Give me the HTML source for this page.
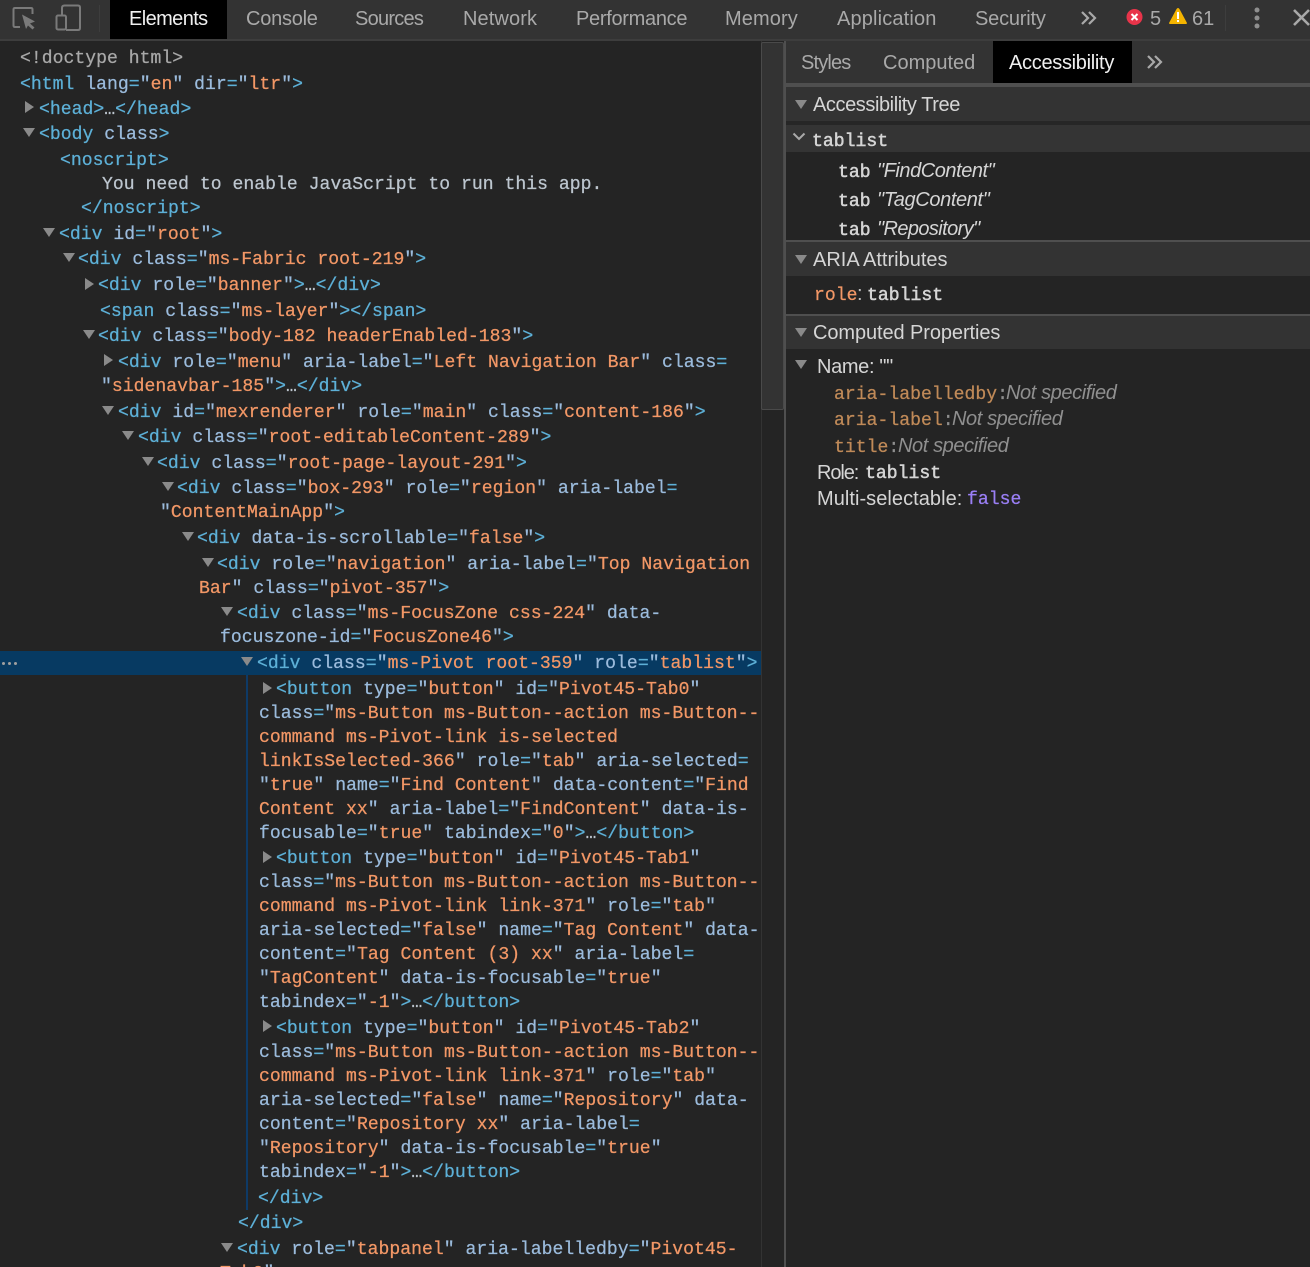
<!DOCTYPE html>
<html lang="en"><head><meta charset="utf-8"><title>DevTools</title>
<style>
html,body{margin:0;padding:0;background:#242424}
#r{position:relative;width:1310px;height:1267px;overflow:hidden;background:#242424;font-family:"Liberation Sans",sans-serif}
#r div{position:absolute}
.l{font:18.1px/24px "Liberation Mono",monospace;color:#bdc6cf;white-space:pre;height:24px;margin-top:2px;letter-spacing:.02px;-webkit-text-stroke:.25px}
.l b,.l i,.l u,.l s{font-weight:normal;font-style:normal;text-decoration:none}
.l b{color:#5db0d7}.l i{color:#9bbbdc}.l u{color:#f29766}.l s{color:#5db0d7}
.tr{width:0;height:0;border-style:solid;border-color:transparent}
.ar{border-width:6px 0 6px 9px;border-left-color:#8a8a8a;margin-top:0;margin-left:1px}
.ad{border-width:9px 6px 0 6px;border-top-color:#8a8a8a;margin-top:0}
.u{font-size:20px;line-height:26px;white-space:pre;color:#a9a9a9}
.h{left:786px;width:524px;background:#333}
.p{color:#d5d5d5}
.m{font:18.1px/24px "Liberation Mono",monospace;color:#d5d5d5;-webkit-text-stroke:.5px}
.n{font-style:italic}
</style></head><body><div id="r">

<div style="left:0;top:0;width:1310px;height:39px;background:#333"></div>
<div style="left:0;top:39px;width:1310px;height:2px;background:#3d3d3d"></div>
<div style="left:110px;top:0;width:117px;height:39px;background:#000"></div>
<div style="left:99px;top:5px;width:1px;height:27px;background:#3d3d3d"></div>

<svg style="position:absolute;left:0;top:0" width="100" height="36" viewBox="0 0 100 36" fill="none" stroke="#7a7a7a" stroke-width="2">
<path d="M20 27H15q-1.500 0-1.500-1.500V9.500Q13.500 8 15 8H31q1.500 0 1.500 1.500V14"/>
<path d="M22 14.500L35 21.500L30 23.500L34.500 27.500L32.500 29.500L28 25.500L26 29Z" fill="#7a7a7a" stroke="none"/>
<path d="M62 14.500V8q0-2.500 2.500-2.500H78q2 0 2 2V28q0 2-2 2H66"/>
<rect x="56.500" y="15.500" width="9.500" height="14" rx="1.500"/>
</svg>

<div class="u" style="left:129px;top:6px;color:#f0f0f0;letter-spacing:-.6px">Elements</div>
<div class="u" style="left:246px;top:6px;letter-spacing:-.25px">Console</div>
<div class="u" style="left:355px;top:6px;letter-spacing:-.75px">Sources</div>
<div class="u" style="left:463px;top:6px;letter-spacing:.1px">Network</div>
<div class="u" style="left:576px;top:6px;letter-spacing:-.3px">Performance</div>
<div class="u" style="left:725px;top:6px;letter-spacing:.1px">Memory</div>
<div class="u" style="left:837px;top:6px;letter-spacing:.15px">Application</div>
<div class="u" style="left:975px;top:6px;letter-spacing:-.2px">Security</div>

<svg style="position:absolute;left:1078px;top:9px" width="22" height="18" viewBox="0 0 22 18" fill="none" stroke="#a9a9a9" stroke-width="2.200"><path d="M4 3l6 6-6 6M11 3l6 6-6 6"/></svg>
<svg style="position:absolute;left:1126px;top:9px" width="17" height="17" viewBox="0 0 17 17"><circle cx="8.500" cy="8" r="8" fill="#e8344a"/><path d="M5.500 5l6 6M11.500 5l-6 6" stroke="#fff" stroke-width="2"/></svg>
<div class="u" style="left:1150px;top:6px">5</div>
<svg style="position:absolute;left:1169px;top:8px" width="18" height="17" viewBox="0 0 18 17"><path d="M9 0q1 0 2 2l7 13q0 1-1 1H1q-1 0-1-1L7 2q1-2 2-2z" fill="#f4b400"/><rect x="8" y="4" width="2" height="7" fill="#fff"/><rect x="8" y="12" width="2" height="2" fill="#fff"/></svg>
<div class="u" style="left:1192px;top:6px">61</div>
<div style="left:1225px;top:5px;width:1px;height:26px;background:#3d3d3d"></div>
<svg style="position:absolute;left:1250px;top:7px" width="14" height="22" viewBox="0 0 14 22" fill="#8f8f8f"><circle cx="7" cy="3" r="2.500"/><circle cx="7" cy="11" r="2.500"/><circle cx="7" cy="19" r="2.500"/></svg>
<svg style="position:absolute;left:1292px;top:8px" width="18" height="18" viewBox="0 0 18 18" fill="none" stroke="#a9a9a9" stroke-width="2.600"><path d="M2 2l15 15M17 2L2 17"/></svg>

<!-- scrollbar -->
<div style="left:761px;top:41px;width:23px;height:1226px;border-left:1px solid #333;box-sizing:border-box;background:#242424"></div>
<div style="left:761px;top:42px;width:23px;height:368px;background:#333;border:1px solid #4a4a4a;box-sizing:border-box;border-radius:2px"></div>
<div style="left:784px;top:41px;width:2px;height:1226px;background:#4f4f4f"></div>

<!-- selected row -->
<div style="left:0;top:651px;width:761px;height:24px;background:#073a62"></div>
<div style="left:2px;top:662px;width:3px;height:3px;border-radius:50%;background:#a0a0a0"></div>
<div style="left:8px;top:662px;width:3px;height:3px;border-radius:50%;background:#a0a0a0"></div>
<div style="left:14px;top:662px;width:3px;height:3px;border-radius:50%;background:#a0a0a0"></div>
<div style="left:246px;top:675px;width:2px;height:535px;background:#0e3a66"></div>

<!-- arrows -->
<div class="tr ar" style="left:24px;top:101px"></div>
<div class="tr ad" style="left:23px;top:128px"></div>
<div class="tr ad" style="left:43px;top:228px"></div>
<div class="tr ad" style="left:63px;top:253px"></div>
<div class="tr ar" style="left:84px;top:278px"></div>
<div class="tr ad" style="left:83px;top:330px"></div>
<div class="tr ar" style="left:103px;top:354px"></div>
<div class="tr ad" style="left:102px;top:406px"></div>
<div class="tr ad" style="left:122px;top:431px"></div>
<div class="tr ad" style="left:142px;top:457px"></div>
<div class="tr ad" style="left:162px;top:482px"></div>
<div class="tr ad" style="left:182px;top:532px"></div>
<div class="tr ad" style="left:202px;top:558px"></div>
<div class="tr ad" style="left:221px;top:607px"></div>
<div class="tr ad" style="left:241px;top:657px"></div>
<div class="tr ar" style="left:262px;top:682px"></div>
<div class="tr ar" style="left:262px;top:851px"></div>
<div class="tr ar" style="left:262px;top:1020px"></div>
<div class="tr ad" style="left:221px;top:1243px"></div>

<!-- DOM tree -->
<div class="l" style="left:20px;top:45px;color:#a8a8a8">&lt;!doctype html&gt;</div>
<div class="l" style="left:20px;top:71px"><b>&lt;html</b> <i>lang</i><s>=</s><i>"</i><u>en</u><i>"</i> <i>dir</i><s>=</s><i>"</i><u>ltr</u><i>"</i><b>&gt;</b></div>
<div class="l" style="left:39px;top:96px"><b>&lt;head&gt;</b>…<b>&lt;/head&gt;</b></div>
<div class="l" style="left:39px;top:121px"><b>&lt;body</b> <i>class</i><b>&gt;</b></div>
<div class="l" style="left:60px;top:147px"><b>&lt;noscript&gt;</b></div>
<div class="l" style="left:102px;top:171px">You need to enable JavaScript to run this app.</div>
<div class="l" style="left:81px;top:195px"><b>&lt;/noscript&gt;</b></div>
<div class="l" style="left:59px;top:221px"><b>&lt;div</b> <i>id</i><s>=</s><i>"</i><u>root</u><i>"</i><b>&gt;</b></div>
<div class="l" style="left:78px;top:246px"><b>&lt;div</b> <i>class</i><s>=</s><i>"</i><u>ms-Fabric root-219</u><i>"</i><b>&gt;</b></div>
<div class="l" style="left:98px;top:272px"><b>&lt;div</b> <i>role</i><s>=</s><i>"</i><u>banner</u><i>"</i><b>&gt;</b>…<b>&lt;/div&gt;</b></div>
<div class="l" style="left:100px;top:298px"><b>&lt;span</b> <i>class</i><s>=</s><i>"</i><u>ms-layer</u><i>"</i><b>&gt;&lt;/span&gt;</b></div>
<div class="l" style="left:98px;top:323px"><b>&lt;div</b> <i>class</i><s>=</s><i>"</i><u>body-182 headerEnabled-183</u><i>"</i><b>&gt;</b></div>
<div class="l" style="left:118px;top:349px"><b>&lt;div</b> <i>role</i><s>=</s><i>"</i><u>menu</u><i>"</i> <i>aria-label</i><s>=</s><i>"</i><u>Left Navigation Bar</u><i>"</i> <i>class</i><s>=</s></div>
<div class="l" style="left:101px;top:373px"><i>"</i><u>sidenavbar-185</u><i>"</i><b>&gt;</b>…<b>&lt;/div&gt;</b></div>
<div class="l" style="left:118px;top:399px"><b>&lt;div</b> <i>id</i><s>=</s><i>"</i><u>mexrenderer</u><i>"</i> <i>role</i><s>=</s><i>"</i><u>main</u><i>"</i> <i>class</i><s>=</s><i>"</i><u>content-186</u><i>"</i><b>&gt;</b></div>
<div class="l" style="left:138px;top:424px"><b>&lt;div</b> <i>class</i><s>=</s><i>"</i><u>root-editableContent-289</u><i>"</i><b>&gt;</b></div>
<div class="l" style="left:157px;top:450px"><b>&lt;div</b> <i>class</i><s>=</s><i>"</i><u>root-page-layout-291</u><i>"</i><b>&gt;</b></div>
<div class="l" style="left:177px;top:475px"><b>&lt;div</b> <i>class</i><s>=</s><i>"</i><u>box-293</u><i>"</i> <i>role</i><s>=</s><i>"</i><u>region</u><i>"</i> <i>aria-label</i><s>=</s></div>
<div class="l" style="left:160px;top:499px"><i>"</i><u>ContentMainApp</u><i>"</i><b>&gt;</b></div>
<div class="l" style="left:197px;top:525px"><b>&lt;div</b> <i>data-is-scrollable</i><s>=</s><i>"</i><u>false</u><i>"</i><b>&gt;</b></div>
<div class="l" style="left:217px;top:551px"><b>&lt;div</b> <i>role</i><s>=</s><i>"</i><u>navigation</u><i>"</i> <i>aria-label</i><s>=</s><i>"</i><u>Top Navigation</u></div>
<div class="l" style="left:199px;top:575px"><u>Bar</u><i>"</i> <i>class</i><s>=</s><i>"</i><u>pivot-357</u><i>"</i><b>&gt;</b></div>
<div class="l" style="left:237px;top:600px"><b>&lt;div</b> <i>class</i><s>=</s><i>"</i><u>ms-FocusZone css-224</u><i>"</i> <i>data-</i></div>
<div class="l" style="left:220px;top:624px"><i>focuszone-id</i><s>=</s><i>"</i><u>FocusZone46</u><i>"</i><b>&gt;</b></div>
<div class="l" style="left:257px;top:650px"><b>&lt;div</b> <i>class</i><s>=</s><i>"</i><u>ms-Pivot root-359</u><i>"</i> <i>role</i><s>=</s><i>"</i><u>tablist</u><i>"</i><b>&gt;</b></div>

<div class="l" style="left:276px;top:676px"><b>&lt;button</b> <i>type</i><s>=</s><i>"</i><u>button</u><i>"</i> <i>id</i><s>=</s><i>"</i><u>Pivot45-Tab0</u><i>"</i></div>
<div class="l" style="left:259px;top:700px"><i>class</i><s>=</s><i>"</i><u>ms-Button ms-Button--action ms-Button--</u></div>
<div class="l" style="left:259px;top:724px"><u>command ms-Pivot-link is-selected</u></div>
<div class="l" style="left:259px;top:748px"><u>linkIsSelected-366</u><i>"</i> <i>role</i><s>=</s><i>"</i><u>tab</u><i>"</i> <i>aria-selected</i><s>=</s></div>
<div class="l" style="left:259px;top:772px"><i>"</i><u>true</u><i>"</i> <i>name</i><s>=</s><i>"</i><u>Find Content</u><i>"</i> <i>data-content</i><s>=</s><i>"</i><u>Find</u></div>
<div class="l" style="left:259px;top:796px"><u>Content xx</u><i>"</i> <i>aria-label</i><s>=</s><i>"</i><u>FindContent</u><i>"</i> <i>data-is-</i></div>
<div class="l" style="left:259px;top:820px"><i>focusable</i><s>=</s><i>"</i><u>true</u><i>"</i> <i>tabindex</i><s>=</s><i>"</i><u>0</u><i>"</i><b>&gt;</b>…<b>&lt;/button&gt;</b></div>

<div class="l" style="left:276px;top:845px"><b>&lt;button</b> <i>type</i><s>=</s><i>"</i><u>button</u><i>"</i> <i>id</i><s>=</s><i>"</i><u>Pivot45-Tab1</u><i>"</i></div>
<div class="l" style="left:259px;top:869px"><i>class</i><s>=</s><i>"</i><u>ms-Button ms-Button--action ms-Button--</u></div>
<div class="l" style="left:259px;top:893px"><u>command ms-Pivot-link link-371</u><i>"</i> <i>role</i><s>=</s><i>"</i><u>tab</u><i>"</i></div>
<div class="l" style="left:259px;top:917px"><i>aria-selected</i><s>=</s><i>"</i><u>false</u><i>"</i> <i>name</i><s>=</s><i>"</i><u>Tag Content</u><i>"</i> <i>data-</i></div>
<div class="l" style="left:259px;top:941px"><i>content</i><s>=</s><i>"</i><u>Tag Content (3) xx</u><i>"</i> <i>aria-label</i><s>=</s></div>
<div class="l" style="left:259px;top:965px"><i>"</i><u>TagContent</u><i>"</i> <i>data-is-focusable</i><s>=</s><i>"</i><u>true</u><i>"</i></div>
<div class="l" style="left:259px;top:989px"><i>tabindex</i><s>=</s><i>"</i><u>-1</u><i>"</i><b>&gt;</b>…<b>&lt;/button&gt;</b></div>

<div class="l" style="left:276px;top:1015px"><b>&lt;button</b> <i>type</i><s>=</s><i>"</i><u>button</u><i>"</i> <i>id</i><s>=</s><i>"</i><u>Pivot45-Tab2</u><i>"</i></div>
<div class="l" style="left:259px;top:1039px"><i>class</i><s>=</s><i>"</i><u>ms-Button ms-Button--action ms-Button--</u></div>
<div class="l" style="left:259px;top:1063px"><u>command ms-Pivot-link link-371</u><i>"</i> <i>role</i><s>=</s><i>"</i><u>tab</u><i>"</i></div>
<div class="l" style="left:259px;top:1087px"><i>aria-selected</i><s>=</s><i>"</i><u>false</u><i>"</i> <i>name</i><s>=</s><i>"</i><u>Repository</u><i>"</i> <i>data-</i></div>
<div class="l" style="left:259px;top:1111px"><i>content</i><s>=</s><i>"</i><u>Repository xx</u><i>"</i> <i>aria-label</i><s>=</s></div>
<div class="l" style="left:259px;top:1135px"><i>"</i><u>Repository</u><i>"</i> <i>data-is-focusable</i><s>=</s><i>"</i><u>true</u><i>"</i></div>
<div class="l" style="left:259px;top:1159px"><i>tabindex</i><s>=</s><i>"</i><u>-1</u><i>"</i><b>&gt;</b>…<b>&lt;/button&gt;</b></div>
<div class="l" style="left:258px;top:1185px"><b>&lt;/div&gt;</b></div>
<div class="l" style="left:238px;top:1210px"><b>&lt;/div&gt;</b></div>
<div class="l" style="left:237px;top:1236px"><b>&lt;div</b> <i>role</i><s>=</s><i>"</i><u>tabpanel</u><i>"</i> <i>aria-labelledby</i><s>=</s><i>"</i><u>Pivot45-</u></div>
<div class="l" style="left:220px;top:1260px"><u>Tab0</u><i>"</i></div>

<!-- right panel tabs -->
<div style="left:993px;top:41px;width:139px;height:42px;background:#000"></div>
<div style="left:786px;top:83px;width:524px;height:4px;background:#4f4f4f"></div>
<div style="left:786px;top:41px;width:207px;height:42px;background:#333"></div>
<div style="left:1132px;top:41px;width:178px;height:42px;background:#333"></div>
<div class="u" style="left:801px;top:50px;letter-spacing:-.85px">Styles</div>
<div class="u" style="left:883px;top:50px;letter-spacing:0">Computed</div>
<div class="u" style="left:1009px;top:50px;color:#f0f0f0;letter-spacing:-.3px">Accessibility</div>
<svg style="position:absolute;left:1144px;top:53px" width="22" height="18" viewBox="0 0 22 18" fill="none" stroke="#a9a9a9" stroke-width="2.200"><path d="M4 3l6 6-6 6M11 3l6 6-6 6"/></svg>

<!-- sections -->
<div class="h" style="top:87px;height:34px"></div>
<div class="h" style="top:121px;height:4px;background:#262626"></div>
<div class="h" style="top:125px;height:27px;background:#343434"></div>
<div class="h" style="top:240px;height:2px;background:#4f4f4f"></div>
<div class="h" style="top:242px;height:34px"></div>
<div class="h" style="top:314px;height:2px;background:#4f4f4f"></div>
<div class="h" style="top:316px;height:33px"></div>

<div class="tr ad" style="left:795px;top:100px"></div>
<div class="u p" style="left:813px;top:92px;letter-spacing:-.42px">Accessibility Tree</div>
<svg style="position:absolute;left:792px;top:132px" width="14" height="10" viewBox="0 0 14 10" fill="none" stroke="#a9a9a9" stroke-width="2"><path d="M1.500 1.500L7 7l5.500-5.500"/></svg>
<div class="l m" style="left:812px;top:128px">tablist</div>
<div class="l m" style="left:838px;top:159px">tab</div>
<div class="u p n" style="left:877px;top:158px;letter-spacing:-.45px">"FindContent"</div>
<div class="l m" style="left:838px;top:188px">tab</div>
<div class="u p n" style="left:877px;top:187px;letter-spacing:-.37px">"TagContent"</div>
<div class="l m" style="left:838px;top:217px">tab</div>
<div class="u p n" style="left:877px;top:216px;letter-spacing:-.6px">"Repository"</div>

<div class="tr ad" style="left:795px;top:255px"></div>
<div class="u p" style="left:813px;top:247px;letter-spacing:0">ARIA Attributes</div>
<div class="l" style="left:814px;top:282px;color:#f29766">role</div>
<div class="u" style="left:857px;top:281px;color:#bdbdbd">:</div>
<div class="l m" style="left:867px;top:282px">tablist</div>

<div class="tr ad" style="left:795px;top:328px"></div>
<div class="u p" style="left:813px;top:320px;letter-spacing:-.09px">Computed Properties</div>
<div class="tr ad" style="left:795px;top:360px"></div>
<div class="u p" style="left:817px;top:354px;letter-spacing:-.35px">Name: ""</div>
<div class="l" style="left:834px;top:381px;color:#c08a58">aria-labelledby<span style="color:#8f8f8f">:</span></div>
<div class="u n" style="left:1006px;top:380px;color:#8f8f8f;letter-spacing:-.4px">Not specified</div>
<div class="l" style="left:834px;top:407px;color:#c08a58">aria-label<span style="color:#8f8f8f">:</span></div>
<div class="u n" style="left:952px;top:406px;color:#8f8f8f;letter-spacing:-.4px">Not specified</div>
<div class="l" style="left:834px;top:434px;color:#c08a58">title<span style="color:#8f8f8f">:</span></div>
<div class="u n" style="left:898px;top:433px;color:#8f8f8f;letter-spacing:-.4px">Not specified</div>
<div class="u p" style="left:817px;top:460px;letter-spacing:-1.1px">Role:</div>
<div class="l m" style="left:865px;top:460px">tablist</div>
<div class="u p" style="left:817px;top:486px;letter-spacing:.05px">Multi-selectable:</div>
<div class="l" style="left:967px;top:486px;color:#9a7ff5">false</div>

</div></body></html>
